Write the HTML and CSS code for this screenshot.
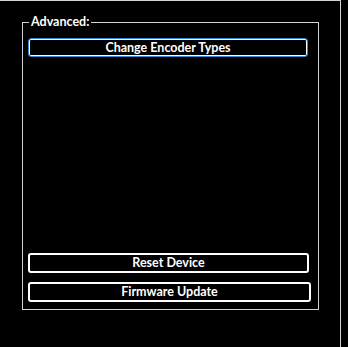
FILE: index.html
```html
<!DOCTYPE html>
<html>
<head>
<meta charset="utf-8">
<link rel="stylesheet" href="styles.css">
</head>
<body>
<div class="panel">
  <div class="group">
    <span class="legend">Advanced:</span>
    <button class="btn btn-focus">Change Encoder Types</button>
    <div class="spacer"></div>
    <button class="btn btn-reset">Reset Device</button>
    <button class="btn btn-fw">Firmware Update</button>
  </div>
</div>
</body>
</html>
```
FILE: styles.css
```css
html, body {
  margin: 0;
  padding: 0;
  background: #000;
  height: 100%;
  overflow: hidden;
}
body {
  font-family: "Lato", "Liberation Sans", sans-serif;
  font-weight: bold;
  font-size: 12.5px;
  color: #fff;
}
.panel {
  box-sizing: border-box;
  width: 341px;
  height: 360px;
  border-top: 1px solid #d4d4d4;
  border-right: 1px solid #d4d4d4;
  padding-top: 21px;
  padding-left: 22px;
}
.group {
  position: relative;
  box-sizing: border-box;
  width: 297px;
  height: 288px;
  border: 1px solid #d4d4d4;
  padding: 15px 0 7px 5px;
  display: flex;
  flex-direction: column;
  align-items: flex-start;
}
.legend {
  position: absolute;
  top: -9px;
  left: 6px;
  padding: 0 2px;
  background: #000;
  line-height: 16px;
}
.btn {
  box-sizing: border-box;
  height: 20px;
  margin: 0;
  padding: 0;
  background: #000;
  color: #fff;
  font: inherit;
  border: 2px solid #fff;
  border-radius: 3px;
  text-align: center;
  line-height: 16px;
}
.btn-focus {
  width: 280px;
  height: 19px;
  border: 1px solid #2f88dc;
  box-shadow: inset 0 0 0 1px #fff;
}
.spacer {
  flex: 1;
}
.btn-reset {
  width: 281px;
}
.btn-fw {
  width: 283px;
  margin-top: 9px;
}
```
